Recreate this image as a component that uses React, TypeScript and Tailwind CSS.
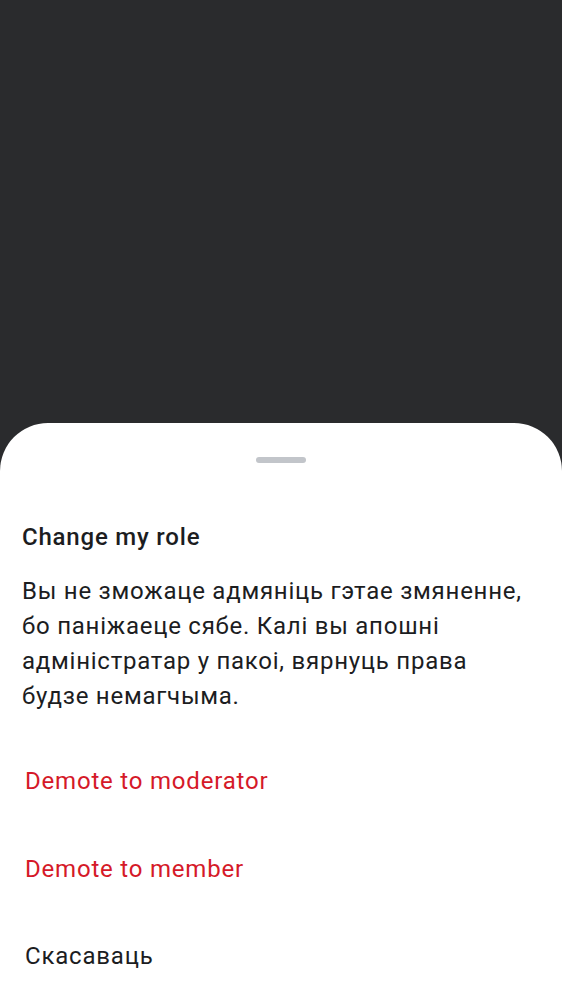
export default function App() {
  const options = [
    { label: "Demote to moderator", danger: true },
    { label: "Demote to member", danger: true },
    { label: "Скасаваць", danger: false },
  ];

  return (
    <div
      className="flex h-[1000px] w-full flex-col justify-end bg-[#2a2b2d]"
      style={{ fontFamily: "Roboto, 'Noto Sans', sans-serif" }}
    >
      <div className="flex flex-col rounded-t-[48px] bg-white pt-[34px]">
        <div className="mx-auto h-[6px] w-[50px] rounded-full bg-[#c2c5ca]" />
        <h2 className="mt-[59px] px-[22px] text-[24px] leading-[30px] font-medium tracking-[0.8px] text-[#1c1d1f]">
          Change my role
        </h2>
        <p className="mt-[22px] pl-[22px] pr-[22px] text-[24px] leading-[35px] tracking-[0.75px] text-[#1c1d1f]">
          Вы не зможаце адмяніць гэтае змяненне, бо паніжаеце сябе. Калі вы апошні адміністратар у пакоі, вярнуць права будзе немагчыма.
        </p>
        <div className="mt-[24px] flex flex-col">
          {options.map((o) => (
            <button
              key={o.label}
              className={`flex h-[87.5px] items-center px-[25px] text-left text-[24px] tracking-[0.8px] ${
                o.danger ? "text-[#d51928]" : "text-[#1c1d1f]"
              }`}
            >
              {o.label}
            </button>
          ))}
        </div>
      </div>
    </div>
  );
}
